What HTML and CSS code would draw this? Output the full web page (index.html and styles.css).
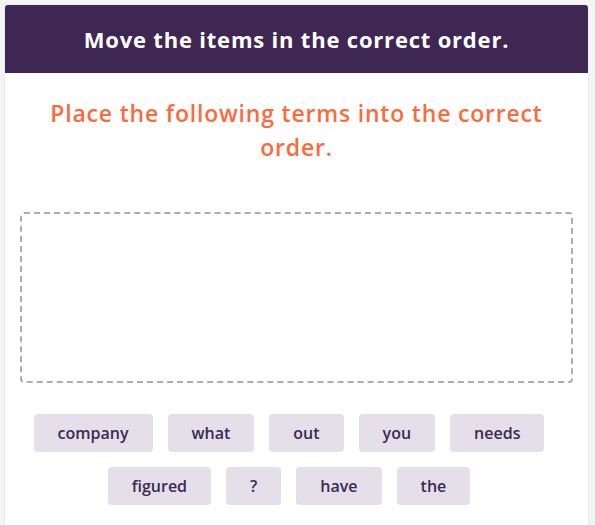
FILE: index.html
```html
<!DOCTYPE html>
<html>
<head>
<meta charset="utf-8">
<link rel="stylesheet" href="styles.css">
</head>
<body>
<div class="card">
  <div class="card-header">Move the items in the correct order.</div>
  <div class="card-body">
    <h2 class="prompt">Place the following terms into the correct order.</h2>
    <div class="dropzone"></div>
    <div class="tiles">
      <span class="tile">company</span>
      <span class="tile">what</span>
      <span class="tile">out</span>
      <span class="tile">you</span>
      <span class="tile">needs</span>
      <span class="tile">figured</span>
      <span class="tile">?</span>
      <span class="tile">have</span>
      <span class="tile">the</span>
    </div>
  </div>
</div>
</body>
</html>
```
FILE: styles.css
```css
html, body {
  margin: 0;
  padding: 0;
}
body {
  background: #f4f4f4;
  padding: 5px 7px 0 5px;
  font-family: "Open Sans", "Noto Sans", sans-serif;
}
.card {
  background: #fff;
  border-radius: 3px 3px 0 0;
  box-shadow: 0 0 2px rgba(0,0,0,0.12);
  min-height: 530px;
}
.card-header {
  background: #3f2753;
  color: #fff;
  height: 68px;
  border-radius: 3px 3px 0 0;
  display: flex;
  align-items: center;
  justify-content: center;
  font-size: 22px;
  font-weight: 700;
  letter-spacing: 0.8px;
}
.card-body {
  padding: 23px 15px 15px;
}
.prompt {
  margin: 0 20px;
  text-align: center;
  color: #fd6a3b;
  font-size: 23px;
  font-weight: 600;
  letter-spacing: 0.8px;
  line-height: 34px;
}
.dropzone {
  margin-top: 48px;
  height: 167px;
  border: 2px dashed #adadad;
  border-radius: 4px;
}
.tiles {
  margin-top: 31px;
  display: flex;
  flex-wrap: wrap;
  justify-content: center;
}
.tile {
  height: 38px;
  padding: 0 24px;
  margin: 0 15px 15px 0;
  background: #e4dfe9;
  color: #3b2a55;
  border-radius: 4px;
  display: flex;
  align-items: center;
  font-size: 16px;
  font-weight: 600;
  letter-spacing: 0;
}
```
